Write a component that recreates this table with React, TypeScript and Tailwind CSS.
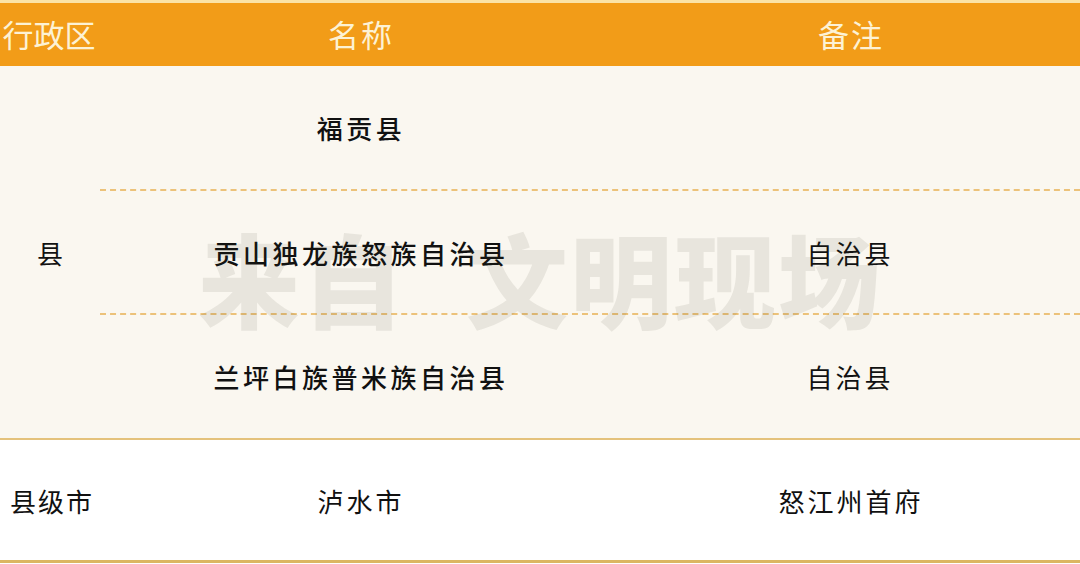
const font = { fontFamily: '"Noto Sans CJK SC", "Noto Sans", sans-serif' }

type Row = { name: string; note: string; bold?: boolean }

const countyRows: Row[] = [
  { name: '福贡县', note: '', bold: true },
  { name: '贡山独龙族怒族自治县', note: '自治县', bold: true },
  { name: '兰坪白族普米族自治县', note: '自治县', bold: true },
]

export default function App() {
  return (
    <div className="relative w-[1080px] h-[564px] overflow-hidden bg-white" style={font}>
      {/* 顶部细线 */}
      <div className="h-[3px] bg-[#fbe3a6]" />

      {/* 表头 */}
      <div className="grid grid-cols-[100px_522px_1fr] h-[63px] bg-[#f29c18] text-[#fdf2d4] text-[31px] items-center">
        <div className="text-center pr-[2px]">行政区</div>
        <div className="text-center tracking-[2px]">名称</div>
        <div className="text-center tracking-[2px]">备注</div>
      </div>

      {/* 县 */}
      <div className="grid grid-cols-[100px_1fr] h-[372px] bg-[#faf7f0] text-[#111] text-[26px]">
        <div className="flex items-center justify-center">县</div>
        <div className="flex flex-col">
          {countyRows.map((r, i) => (
            <div
              key={r.name}
              className={`flex-1 grid grid-cols-[522px_1fr] items-center ${i > 0 ? 'border-t-2 border-dashed border-[#ecc27a]' : ''}`}
            >
              <div className={`text-center tracking-[3.5px] ${r.bold ? 'font-medium' : ''}`}>{r.name}</div>
              <div className="text-center tracking-[3px] pr-[2px]">{r.note}</div>
            </div>
          ))}
        </div>
      </div>

      <div className="h-[2px] bg-[#e4c27c]" />

      {/* 县级市 */}
      <div className="grid grid-cols-[100px_522px_1fr] h-[120px] items-center text-[#111] text-[26px] bg-white">
        <div className="text-center tracking-[2px] pl-[4px]">县级市</div>
        <div className="text-center tracking-[3px]">泸水市</div>
        <div className="text-center tracking-[3px]">怒江州首府</div>
      </div>
      <div className="h-[3px] bg-[#dcb662]" />

      {/* 水印 */}
      <div className="pointer-events-none absolute left-[198px] top-[226px] flex items-center gap-[60px] text-[102px] font-black text-[rgba(60,50,30,0.09)] leading-none">
        <span className="tracking-[2px]">来自</span>
        <span className="tracking-[2px]">文明现场</span>
      </div>
    </div>
  )
}
